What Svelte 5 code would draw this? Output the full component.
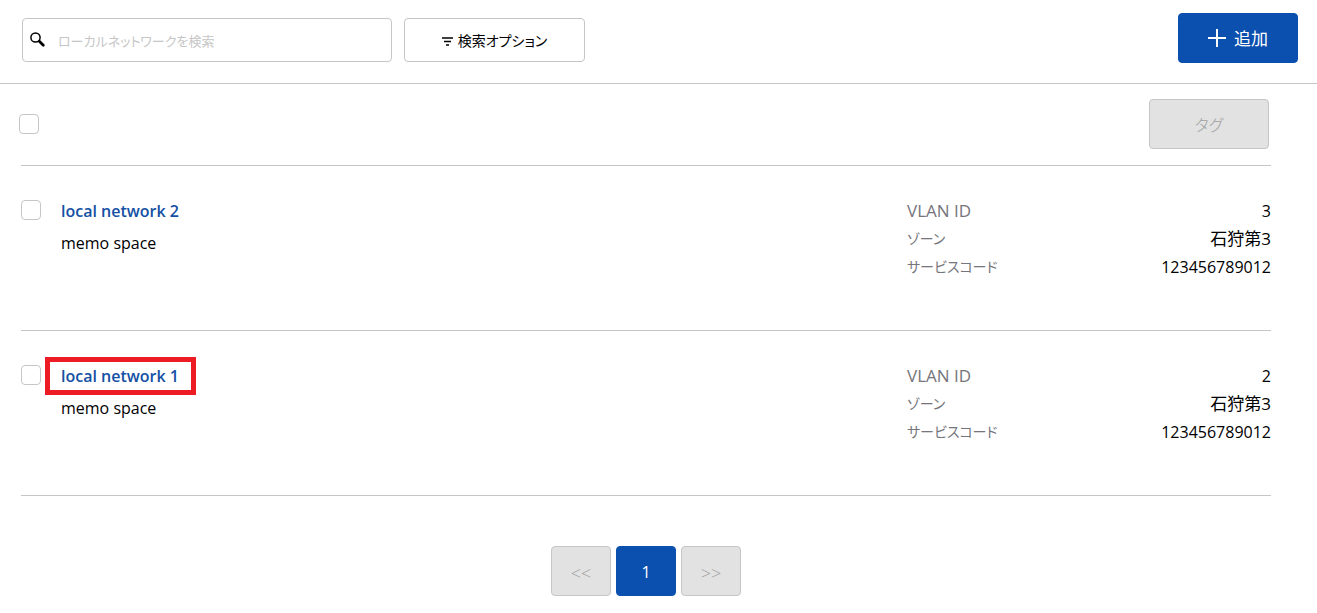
<script lang="ts">
  const networks = [
    { id: 2, name: 'local network 2', memo: 'memo space', vlan: '3', zone: '石狩第3', code: '123456789012', marked: false },
    { id: 1, name: 'local network 1', memo: 'memo space', vlan: '2', zone: '石狩第3', code: '123456789012', marked: true },
  ];
</script>

<header class="topbar">
  <label class="search">
    <svg width="16" height="16" viewBox="0 0 16 16" aria-hidden="true">
      <circle cx="5.5" cy="5.5" r="4.6" fill="none" stroke="#000" stroke-width="1.5" />
      <path d="M9.3 9.3L13.3 13.3" stroke="#000" stroke-width="2.8" stroke-linecap="round" />
    </svg>
    <input type="search" placeholder="ローカルネットワークを検索" aria-label="ローカルネットワークを検索" />
  </label>
  <button class="options" type="button">
    <svg width="11" height="9" viewBox="0 0 11 9" aria-hidden="true">
      <path d="M0 1H11M2 4.5H9M4 8H7" stroke="#000" stroke-width="1.6" />
    </svg>
    検索オプション
  </button>
  <button class="button primary add" type="button">
    <svg width="18" height="18" viewBox="0 0 18 18" aria-hidden="true">
      <path d="M9 0V18M0 9H18" stroke="#fff" stroke-width="2" />
    </svg>
    <span>追加</span>
  </button>
</header>

<main>
  <div class="toolbar">
    <input type="checkbox" aria-label="すべて選択" />
    <button class="button" type="button" disabled>タグ</button>
  </div>

  <ul class="list">
    {#each networks as network (network.id)}
      <li class="row">
        <input type="checkbox" aria-label={network.name} />
        <div class="summary">
          <a class="name" class:marked={network.marked} href="#network-{network.id}">{network.name}</a>
          <p>{network.memo}</p>
        </div>
        <dl>
          <div><dt>VLAN ID</dt><dd>{network.vlan}</dd></div>
          <div><dt class="kana">ゾーン</dt><dd class="zone">{network.zone}</dd></div>
          <div><dt class="kana">サービスコード</dt><dd>{network.code}</dd></div>
        </dl>
      </li>
    {/each}
  </ul>

  <nav class="pages">
    <button class="button page arrow" type="button" disabled>&lt;&lt;</button>
    <button class="button page primary" type="button">1</button>
    <button class="button page arrow" type="button" disabled>&gt;&gt;</button>
  </nav>
</main>

<style>
  :global(body) {
    background: #fff;
    color: #000;
    font-family: "Open Sans", "Noto Sans CJK JP", sans-serif;
    font-size: 16px;
    line-height: 28px;
    font-feature-settings: "palt";
  }

  button,
  input {
    font: inherit;
    font-feature-settings: inherit;
    color: inherit;
  }

  button {
    display: flex;
    align-items: center;
    justify-content: center;
    box-sizing: border-box;
    padding: 2px 0 0;
    border: 1px solid #c6c6c6;
    border-radius: 4px;
    cursor: pointer;
  }

  .topbar {
    display: flex;
    align-items: center;
    gap: 12px;
    padding: 13px 19px 20px 22px;
    border-bottom: 1px solid #c6c6c6;
  }

  .search {
    display: flex;
    align-items: center;
    gap: 12px;
    box-sizing: border-box;
    width: 29%;
    height: 44px;
    margin-top: 4px;
    padding: 0 7px;
    border: 1px solid #c6c6c6;
    border-radius: 4px;
  }

  .search input {
    flex: 1;
    min-width: 0;
    padding: 2px 0 0;
    border: 0;
    outline: 0;
    background: none;
    font-size: 13px;
  }

  .search input::placeholder {
    color: #c6c6c6;
    opacity: 1;
  }

  .options {
    gap: 5px;
    width: 181px;
    height: 44px;
    margin-top: 4px;
    background: #fff;
    font-size: 14px;
  }

  .button {
    width: 120px;
    height: 50px;
    background: #e2e2e2;
    font-weight: 300;
  }

  .button:disabled {
    color: #a0a0a0;
    cursor: default;
  }

  .primary {
    border-color: #0b50ae;
    background: #0b50ae;
    color: #fff;
    font-weight: 400;
  }

  .add {
    gap: 8px;
    margin-left: auto;
    padding: 0;
    font-size: 17px;
  }

  .add span {
    padding-top: 2px;
  }

  main {
    margin: 0 46px 0 21px;
  }

  input[type="checkbox"] {
    appearance: none;
    flex: none;
    box-sizing: border-box;
    width: 20px;
    height: 20px;
    margin: 0;
    border: 1px solid #c6c6c6;
    border-radius: 4px;
    background: #fff;
  }

  input[type="checkbox"]:checked {
    background: #0b50ae;
  }

  .toolbar {
    display: flex;
    align-items: center;
    justify-content: space-between;
    margin: 0 2px 0 -2px;
    padding: 15px 0 16px;
  }

  .list {
    margin: 0;
    padding: 0;
    border-top: 1px solid #c6c6c6;
    list-style: none;
  }

  .row {
    display: flex;
    align-items: flex-start;
    padding: 31px 0 49px;
    border-bottom: 1px solid #c6c6c6;
  }

  .row > input {
    margin-top: 3px;
  }

  .summary {
    flex: 1;
    padding-left: 20px;
  }

  .name {
    display: inline-block;
    color: #1450a3;
    font-weight: 600;
    text-decoration: none;
  }

  .marked {
    margin: 0 -12px 0 -11px;
    padding: 0 12px 0 11px;
    outline: 5px solid #ed1c24;
  }

  .summary p {
    margin: 4px 0 0;
  }

  dl {
    width: 364px;
    margin: 0;
  }

  dl div {
    display: flex;
    justify-content: space-between;
    height: 28px;
  }

  dt {
    color: #75757b;
    font-size: 17px;
  }

  .kana {
    font-size: 14px;
  }

  dd {
    margin: 0;
  }

  .zone {
    font-size: 17px;
  }

  .pages {
    display: flex;
    justify-content: center;
    gap: 5px;
    padding: 50px 0 16px;
  }

  .page {
    width: 60px;
  }

  .arrow {
    padding-top: 4px;
    font-size: 18px;
  }
</style>
